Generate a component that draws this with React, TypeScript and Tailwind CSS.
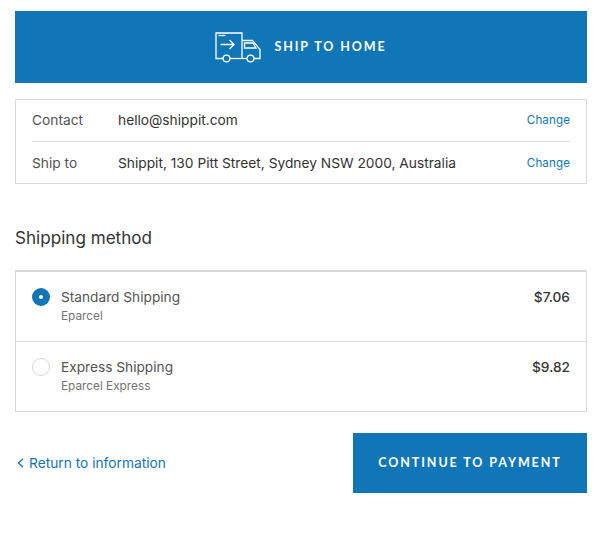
import React from "react";

function Truck() {
  return (
    <svg width="46" height="31" viewBox="0 0 46 31" fill="none" stroke="#fff" strokeWidth="1.3" className="shrink-0">
      <path d="M8 26.5H1V1H27V26.5" />
      <path d="M3.5 3.5H10.5" />
      <path d="M5.5 12.5H19M14.5 8L19 12.5L14.5 17" />
      <path d="M27 8.5H37.5L45 17.5V26.5H39" />
      <path d="M29.5 11H38L41 16H29.5Z" />
      <path d="M15 26.5H32" />
      <circle cx="11.5" cy="26.5" r="3.4" />
      <circle cx="35.5" cy="26.5" r="3.4" />
    </svg>
  );
}

function InfoRow({ label, value, top }: { label: string; value: string; top?: boolean }) {
  return (
    <div className={`flex h-[42px] items-center ${top ? "border-b border-[#dcdcdc] pb-[1px]" : ""}`}>
      <div className="w-[86px] text-[#545454]">{label}</div>
      <div className="flex-1 text-[#333333]">{value}</div>
      <div className="pt-[2px] text-[11.6px] tracking-[0.1px] text-[#1176b8]">Change</div>
    </div>
  );
}

function Method({ name, sub, price, selected, top }: { name: string; sub: string; price: string; selected?: boolean; top?: boolean }) {
  return (
    <div className={`flex h-[70px] items-start px-4 pt-[16px] ${top ? "border-b border-[#d9d9d9]" : ""}`}>
      <div className="mr-[11px] flex h-[18px] w-[18px] shrink-0 items-center justify-center">
        {selected ? (
          <div className="flex h-[18px] w-[18px] items-center justify-center rounded-full bg-[#1176b8]">
            <div className="h-1 w-1 rounded-full bg-white" />
          </div>
        ) : (
          <div className="h-[18px] w-[18px] rounded-full border border-[#d9d9d9]" />
        )}
      </div>
      <div className="flex-1">
        <div className="text-[13.7px] leading-[19px] text-[#545454]">{name}</div>
        <div className="mt-[1px] text-[11.8px] leading-[17px] text-[#737373]">{sub}</div>
      </div>
      <div className="text-[13.7px] font-medium leading-[19px] text-[#333333]">{price}</div>
    </div>
  );
}

export default function App() {
  return (
    <div className="h-[543px] w-[602px] bg-white px-[15px] pt-[11px] font-['Inter',sans-serif] text-[13.75px] antialiased">
      <div className="flex h-[72px] items-center justify-center gap-[13px] bg-[#1176b8]">
        <Truck />
        <span className="font-['Lato',sans-serif] text-[12.5px] font-bold tracking-[1.9px] text-white">SHIP TO HOME</span>
      </div>

      <div className="mt-4 h-[85px] border border-[#d9d9d9] px-4">
        <InfoRow label="Contact" value="hello@shippit.com" top />
        <InfoRow label="Ship to" value="Shippit, 130 Pitt Street, Sydney NSW 2000, Australia" />
      </div>

      <h2 className="mt-[42px] text-[17.1px] leading-[24px] text-[#333333]">Shipping method</h2>

      <div className="mt-[20px] h-[142px] border border-[#d9d9d9] border-t-2">
        <Method name="Standard Shipping" sub="Eparcel" price="$7.06" selected top />
        <Method name="Express Shipping" sub="Eparcel Express" price="$9.82" />
      </div>

      <div className="mt-[21px] flex items-center justify-between">
        <div className="flex items-center gap-[5px] pl-[2px] text-[#1176b8]">
          <svg width="7" height="10" viewBox="0 0 7 10" fill="none" stroke="#1176b8" strokeWidth="1.4">
            <path d="M6 1L1.5 5L6 9" />
          </svg>
          <span>Return to information</span>
        </div>
        <div className="flex h-[60px] w-[234px] items-center justify-center bg-[#1176b8] font-['Lato',sans-serif] text-[12.5px] font-bold tracking-[1.9px] text-white">
          CONTINUE TO PAYMENT
        </div>
      </div>
    </div>
  );
}
